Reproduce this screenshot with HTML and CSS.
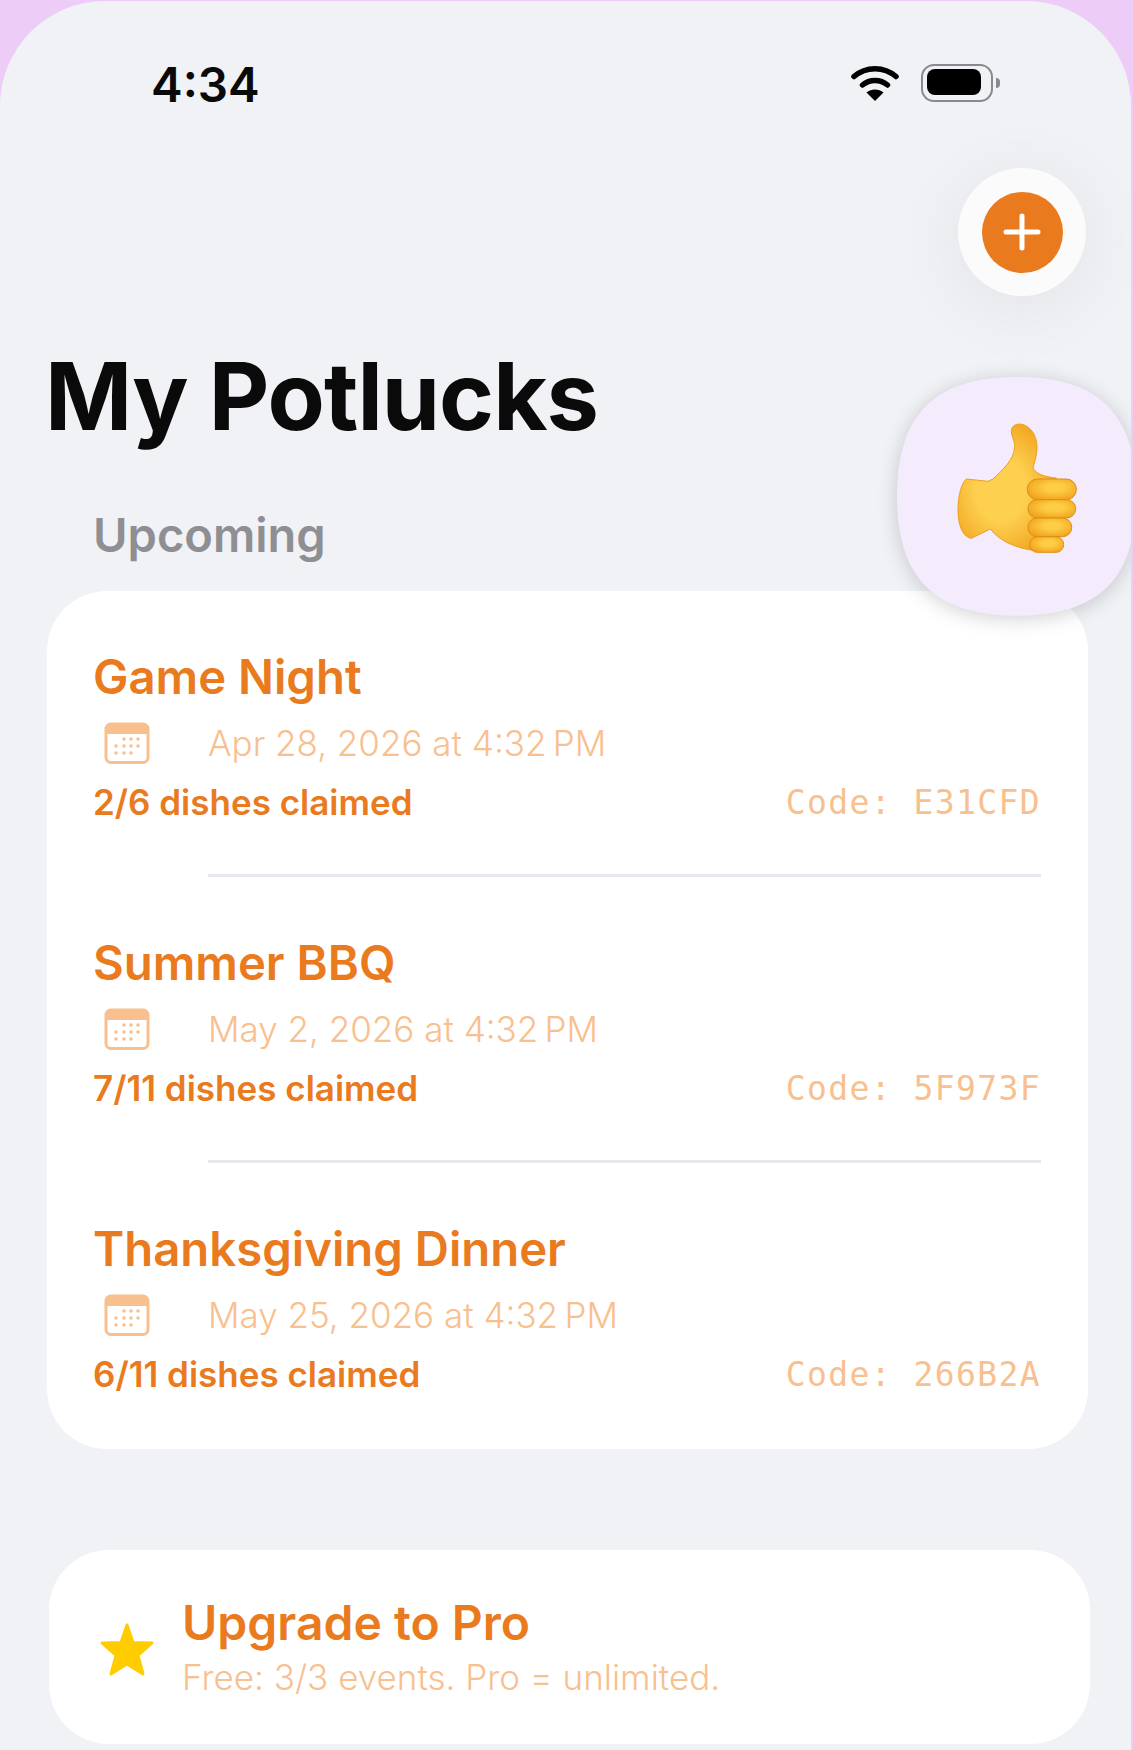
FILE: index.html
```html
<!DOCTYPE html>
<html lang="en">
<head>
    <meta charset="UTF-8">
    <meta name="viewport" content="width=device-width, initial-scale=1.0">
    <title>My Potlucks</title>
    <link rel="stylesheet" href="styles.css">
</head>
<body>
    <div class="screen">
        <div class="status-bar">
            <span class="time">4:34</span>
            <div class="status-icons">
                <svg class="wifi" width="48" height="37" viewBox="0 0 48 37">
                    <path d="M3 12.500C15 2 33 2 45 12.500" fill="none" stroke="#000" stroke-width="5.500" stroke-linecap="round"/>
                    <path d="M11.500 21C18.500 15 29.500 15 36.500 21" fill="none" stroke="#000" stroke-width="5.500" stroke-linecap="round"/>
                    <path d="M24 37L15.500 28.500C20 24.500 28 24.500 32.500 28.500Z" fill="#000"/>
                </svg>
                <div class="battery"><div class="battery-fill"></div></div>
                <div class="battery-cap"></div>
            </div>
        </div>

        <div class="add-row">
            <div class="add-ring">
                <div class="add-btn">
                    <svg width="38" height="38" viewBox="0 0 38 38">
                        <path d="M19 3V35M3 19H35" fill="none" stroke="#fff" stroke-width="5" stroke-linecap="round"/>
                    </svg>
                </div>
            </div>
        </div>

        <h1 class="title">My Potlucks</h1>
        <div class="section-label">Upcoming</div>

        <div class="card events">
            <div class="event">
                <div class="event-name">Game Night</div>
                <div class="event-date">
                    <svg class="cal" width="46" height="42" viewBox="0 0 46 42"><use href="#cal-icon"/></svg>
                    <span>Apr 28, 2026 at 4:32&#8239;PM</span>
                </div>
                <div class="event-foot">
                    <span class="claimed">2/6 dishes claimed</span>
                    <span class="code">Code: E31CFD</span>
                </div>
            </div>
            <div class="divider"></div>
            <div class="event">
                <div class="event-name">Summer BBQ</div>
                <div class="event-date">
                    <svg class="cal" width="46" height="42" viewBox="0 0 46 42"><use href="#cal-icon"/></svg>
                    <span>May 2, 2026 at 4:32&#8239;PM</span>
                </div>
                <div class="event-foot">
                    <span class="claimed">7/11 dishes claimed</span>
                    <span class="code">Code: 5F973F</span>
                </div>
            </div>
            <div class="divider"></div>
            <div class="event">
                <div class="event-name">Thanksgiving Dinner</div>
                <div class="event-date">
                    <svg class="cal" width="46" height="42" viewBox="0 0 46 42"><use href="#cal-icon"/></svg>
                    <span>May 25, 2026 at 4:32&#8239;PM</span>
                </div>
                <div class="event-foot">
                    <span class="claimed">6/11 dishes claimed</span>
                    <span class="code">Code: 266B2A</span>
                </div>
            </div>
        </div>

        <div class="card pro">
            <svg class="star" width="56" height="54" viewBox="0 0 56 54">
                <path d="M28 2L34 19.500L53 20L39 32.500L44 51L28 41L12 51L17 32.500L3 20L22 19.500Z" fill="#ffcc00" stroke="#ffcc00" stroke-width="3" stroke-linejoin="round"/>
            </svg>
            <div>
                <div class="pro-title">Upgrade to Pro</div>
                <div class="pro-sub">Free: 3/3 events. Pro = unlimited.</div>
            </div>
        </div>

        <!-- reaction bubble sits over the list -->
        <svg class="reaction" width="247" height="247" viewBox="100 40 741 741">
            <defs>
                <radialGradient id="hand" cx="0.42" cy="0.52" r="0.62">
                    <stop offset="0.4" stop-color="#fdd04f"/>
                    <stop offset="1" stop-color="#f0a01a"/>
                </radialGradient>
                <radialGradient id="finger" cx="0.55" cy="0.42" r="0.62">
                    <stop offset="0.3" stop-color="#fdcd45"/>
                    <stop offset="1" stop-color="#f2a31c"/>
                </radialGradient>
            </defs>
            <path d="M472 52C720 52 830 165 830 410C830 655 720 768 472 768C224 768 112 655 112 410C112 165 224 52 472 52Z" fill="#f4ebfd"/>
            <path d="M320 358L385 365L400 358C430 330 463 300 465 262C466 238 448 222 458 203C472 185 505 192 522 222C542 258 527 298 520 325C530 345 560 352 590 355L600 565L520 572C470 565 420 545 392 508L335 536C305 530 295 490 295 450C295 410 305 370 320 358Z" fill="url(#hand)" stroke="#eea01c" stroke-width="3"/>
            <rect x="503" y="358" width="147" height="62" rx="30" fill="url(#finger)" stroke="#dc8e18" stroke-width="3"/>
            <rect x="505" y="420" width="143" height="55" rx="27" fill="url(#finger)" stroke="#dc8e18" stroke-width="3"/>
            <rect x="505" y="475" width="131" height="56" rx="27" fill="url(#finger)" stroke="#dc8e18" stroke-width="3"/>
            <rect x="510" y="531" width="102" height="47" rx="23" fill="url(#finger)" stroke="#dc8e18" stroke-width="3"/>
        </svg>
    </div>

    <svg class="defs" width="0" height="0">
        <symbol id="cal-icon" viewBox="0 0 46 42">
            <path d="M7 1H39A6 6 0 0 1 45 7V12H1V7A6 6 0 0 1 7 1Z" fill="#f8bf8f"/>
            <rect x="2" y="2" width="42" height="38.500" rx="5" fill="none" stroke="#f8bf8f" stroke-width="3"/>
            <g fill="#f8bf8f">
                <circle cx="20" cy="17" r="1.800"/><circle cx="27" cy="17" r="1.800"/><circle cx="34" cy="17" r="1.800"/>
                <circle cx="12" cy="24" r="1.800"/><circle cx="20" cy="24" r="1.800"/><circle cx="27" cy="24" r="1.800"/><circle cx="34" cy="24" r="1.800"/>
                <circle cx="12" cy="31" r="1.800"/><circle cx="20" cy="31" r="1.800"/><circle cx="27" cy="31" r="1.800"/>
            </g>
        </symbol>
    </svg>
</body>
</html>
```

FILE: styles.css
```css
html, body {
    margin: 0;
    height: 1750px;
    overflow: hidden;
}
body {
    font-family: Inter, "Noto Sans", sans-serif;
    background: #eeccf8;
}
.screen {
    position: relative;
    margin: 1px 2px 0 0;
    height: 1749px;
    background: #f0f2f6;
    border-radius: 105px 105px 0 0;
    overflow: hidden;
}
.defs {
    position: absolute;
}

/* status bar */
.status-bar {
    display: flex;
    align-items: center;
    justify-content: space-between;
    height: 167px;
    padding: 0 131px 0 151px;
}
.time {
    font-size: 47.500px;
    font-weight: 600;
    color: #0a0a0a;
}
.status-icons {
    display: flex;
    align-items: center;
    margin-bottom: 4px;
}
.wifi {
    margin-right: 22px;
}
.battery {
    box-sizing: border-box;
    width: 72px;
    height: 38px;
    padding: 3.500px;
    border: 2.500px solid #8a8a8e;
    border-radius: 13px;
}
.battery-fill {
    width: 54px;
    height: 26px;
    background: #000;
    border-radius: 8px;
}
.battery-cap {
    width: 4px;
    height: 10px;
    margin-left: 3px;
    background: #8a8a8e;
    border-radius: 0 4px 4px 0;
}

/* add button */
.add-row {
    display: flex;
    justify-content: flex-end;
    padding-right: 45px;
}
.add-ring {
    display: flex;
    align-items: center;
    justify-content: center;
    width: 128px;
    height: 128px;
    background: #fbfbfc;
    border-radius: 50%;
    box-shadow: 0 10px 80px rgba(0,0,0,0.07);
}
.add-btn {
    display: flex;
    align-items: center;
    justify-content: center;
    width: 81px;
    height: 81px;
    background: #ea7a1e;
    border-radius: 50%;
}

/* headings */
.title {
    margin: 50px 0 0 45px;
    font-size: 93.600px;
    line-height: 100px;
    font-weight: 700;
    letter-spacing: -1px;
    color: #0a0a0a;
}
.section-label {
    margin: 61px 0 0 93px;
    font-size: 47px;
    line-height: 56px;
    font-weight: 600;
    color: #8e8e93;
}

/* cards */
.card {
    background: #fff;
    border-radius: 60px;
}
.events {
    margin: 28px 43px 0 47px;
    padding: 0 47px 0 46px;
}
.event {
    padding: 58px 0 50px;
}
.event:last-child {
    padding-bottom: 53px;
}
.divider {
    height: 3px;
    margin-left: 115px;
    background: #e6e8ee;
}
.event-name {
    font-size: 47.300px;
    line-height: 56px;
    font-weight: 600;
    color: #ea7a1e;
}
.event-date {
    display: flex;
    align-items: center;
    height: 50px;
    margin-top: 13px;
    font-size: 35px;
    font-weight: 300;
    color: #f8bf8f;
}
.cal {
    margin: 0 58px 0 11px;
}
.event-foot {
    display: flex;
    align-items: center;
    justify-content: space-between;
    height: 44px;
    margin-top: 12px;
}
.claimed {
    font-size: 35px;
    font-weight: 600;
    color: #ea7a1e;
}
.code {
    font-family: "DejaVu Sans Mono", monospace;
    font-size: 33px;
    letter-spacing: 1.400px;
    color: #f8bf8f;
}

/* upgrade card */
.pro {
    display: flex;
    align-items: center;
    height: 194px;
    margin: 101px 41px 0 49px;
}
.star {
    margin: 6px 27px 0 50px;
}
.pro-title {
    font-size: 48px;
    line-height: 56px;
    font-weight: 600;
    color: #ea7a1e;
}
.pro-sub {
    margin-top: 4px;
    font-size: 35px;
    line-height: 44px;
    font-weight: 300;
    color: #f8bf8f;
}

/* reaction bubble */
.reaction {
    position: absolute;
    top: 372px;
    left: 893px;
    filter: drop-shadow(0 3px 10px rgba(0,0,0,0.18));
}
```
